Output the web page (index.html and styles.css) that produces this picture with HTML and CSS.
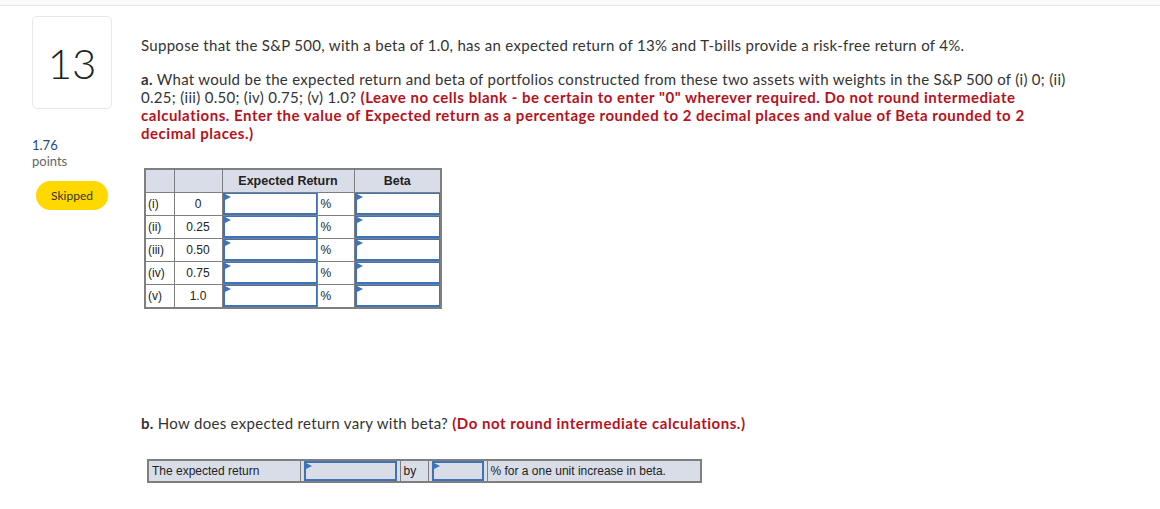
FILE: index.html
```html
<!DOCTYPE html>
<html>
<head>
<meta charset="utf-8">
<link rel="stylesheet" href="styles.css">
</head>
<body>
<div class="topbar"></div>
<div class="page">
  <aside class="side">
    <div class="qnum">13</div>
    <div class="pts">1.76</div>
    <div class="ptslabel">points</div>
    <div class="badge">Skipped</div>
  </aside>
  <main class="main">
    <p class="intro">Suppose that the S&amp;P 500, with a beta of 1.0, has an expected return of 13% and T-bills provide a risk-free return of 4%.</p>
    <p class="parta"><b>a.</b> What would be the expected return and beta of portfolios constructed from these two assets with weights in the S&amp;P 500 of (i) 0; (ii)<br>0.25; (iii) 0.50; (iv) 0.75; (v) 1.0? <span class="red">(Leave no cells blank - be certain to enter "0" wherever required. Do not round intermediate<br>calculations. Enter the value of Expected return as a percentage rounded to 2 decimal places and value of Beta rounded to 2<br>decimal places.)</span></p>
    <table class="grid">
      <tr class="head">
        <th class="c1"></th><th class="c2"></th><th colspan="2">Expected Return</th><th class="c5">Beta</th>
      </tr>
      <tr><td class="c1">(i)</td><td class="c2">0</td><td class="inp c3"><div class="box"><span class="flag"></span></div></td><td class="c4">%</td><td class="inp c5"><div class="box"><span class="flag"></span></div></td></tr>
      <tr><td class="c1">(ii)</td><td class="c2">0.25</td><td class="inp c3"><div class="box"><span class="flag"></span></div></td><td class="c4">%</td><td class="inp c5"><div class="box"><span class="flag"></span></div></td></tr>
      <tr><td class="c1">(iii)</td><td class="c2">0.50</td><td class="inp c3"><div class="box"><span class="flag"></span></div></td><td class="c4">%</td><td class="inp c5"><div class="box"><span class="flag"></span></div></td></tr>
      <tr><td class="c1">(iv)</td><td class="c2">0.75</td><td class="inp c3"><div class="box"><span class="flag"></span></div></td><td class="c4">%</td><td class="inp c5"><div class="box"><span class="flag"></span></div></td></tr>
      <tr><td class="c1">(v)</td><td class="c2">1.0</td><td class="inp c3"><div class="box"><span class="flag"></span></div></td><td class="c4">%</td><td class="inp c5"><div class="box"><span class="flag"></span></div></td></tr>
    </table>
    <p class="partb"><b>b.</b> How does expected return vary with beta? <span class="red">(Do not round intermediate calculations.)</span></p>
    <table class="line">
      <tr>
        <td class="l1">The expected return</td>
        <td class="inp l2"><div class="box"><span class="flag"></span></div></td>
        <td class="l3">by</td>
        <td class="inp l4"><div class="box"><span class="flag"></span></div></td>
        <td class="l5">% for a one unit increase in beta.</td>
      </tr>
    </table>
  </main>
</div>
</body>
</html>
```

FILE: styles.css
```css
* { box-sizing: border-box; }
html, body { margin: 0; padding: 0; background: #fff; }
body { font-family: "Lato", "Open Sans", sans-serif; color: #333; }

.topbar { height: 6px; background: #fafafa; border-bottom: 1px solid #e6e6e6; }

.page { display: flex; padding-top: 10px; }

.side { width: 141px; padding-left: 32px; flex-shrink: 0; }
.qnum {
  width: 80px; height: 93px;
  border: 1px solid #e8e8e8; border-radius: 5px;
  display: flex; align-items: center; justify-content: center;
  font-size: 42px; font-weight: 300; color: #222;
}
.pts { margin-top: 28px; font-size: 13px; color: #1c4a8c; line-height: 16px; }
.ptslabel { font-size: 13px; color: #666; line-height: 16px; }
.badge {
  margin-top: 12px; margin-left: 4px;
  width: 72px; height: 29px; border-radius: 15px;
  background: #ffd800; color: #333;
  font-size: 12px; display: flex; align-items: center; justify-content: center;
}

.main { flex: 1; }
.intro { margin: 20px 0 0; font-size: 15px; line-height: 18px; letter-spacing: 0.3px; }
.parta { margin: 16px 0 0; font-size: 15px; line-height: 18px; letter-spacing: 0.3px; }
.red { color: #b5121b; font-weight: 700; letter-spacing: 0.52px; }
.partb { margin: 105px 0 0; font-size: 15px; line-height: 18px; letter-spacing: 0.3px; }

.grid {
  margin: 26px 0 0 3px;
  border-collapse: collapse;
  border: 2px solid #7f7f7f;
  font-family: "Liberation Sans", Arial, sans-serif;
  font-size: 12px; color: #222;
}
.grid th, .grid td { border: 1px solid #7f7f7f; height: 22px; padding: 0 3px; }
.grid th { background: #d9dde8; font-weight: 700; font-size: 12.5px; text-align: center; height: 23px; }
.grid .c1 { width: 29px; text-align: left; padding-left: 2px; }
.grid .c2 { width: 48px; text-align: center; }
.grid .c3 { width: 95px; }
.grid .c4 { width: 37px; text-align: left; }
.grid .c5 { width: 87px; }

td.inp { padding: 0; position: relative; }
.box {
  position: relative; height: 22px; width: 100%;
  background: #fff; border: 2px solid #3f72b6;
  border-width: 1px 1px 2px 2px;
}
.flag {
  position: absolute; left: 0; top: 0;
  width: 0; height: 0;
  border-top: 3px solid transparent; border-bottom: 3px solid transparent;
  border-left: 6px solid #3f72b6;
}

.line {
  margin: 27px 0 0 6px;
  border-collapse: collapse;
  border: 2px solid #7f7f7f;
  background: #d9dde8;
  font-family: "Liberation Sans", Arial, sans-serif;
  font-size: 12px; color: #222;
}
.line td { border: 1px solid #7f7f7f; height: 20px; padding: 0 3px; }
.line .l1 { width: 152px; }
.line .l2 { width: 100px; }
.line .l3 { width: 28px; }
.line .l4 { width: 59px; }
.line .l5 { width: 214px; }
.line .box { background: #d9dde8; border-width: 2px; height: 20px; }
```
